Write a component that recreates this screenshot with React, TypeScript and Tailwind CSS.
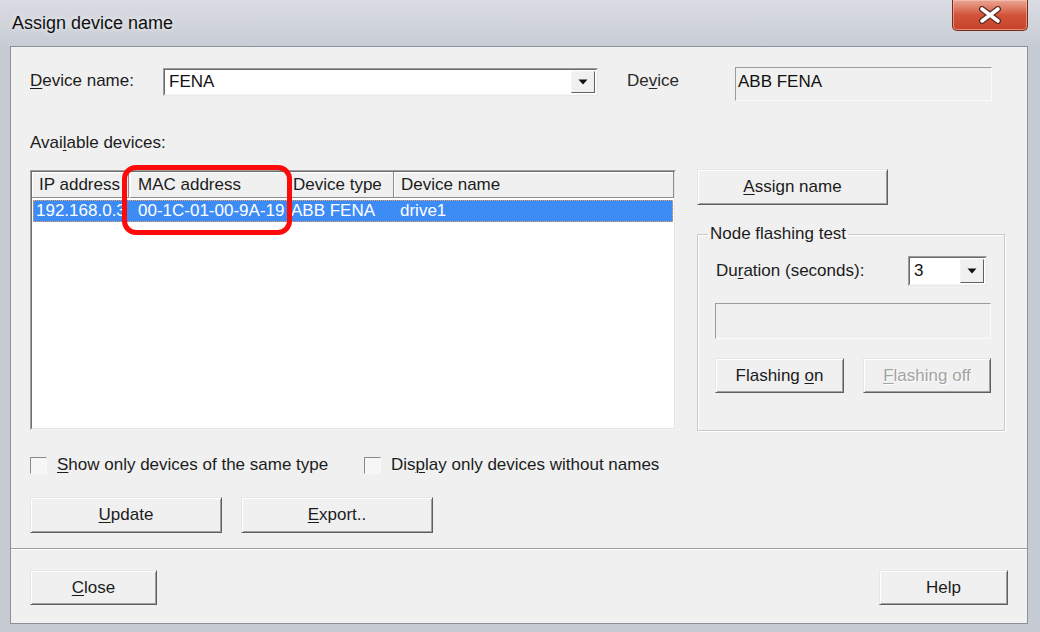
import type { ReactNode } from 'react';

function U({ children }: { children: ReactNode }) {
  return <span className="underline decoration-1 underline-offset-[2px]">{children}</span>;
}

function Button({
  children,
  className = '',
  disabled,
}: {
  children: ReactNode;
  className?: string;
  disabled?: boolean;
}) {
  return (
    <div
      className={`flex items-center justify-center border border-t-[#e6e6e6] border-l-[#e6e6e6] border-r-[#5f5f5f] border-b-[#5f5f5f] bg-[#f0f0f0] shadow-[inset_1px_1px_0_#ffffff,inset_-1px_-1px_0_#a0a0a0] ${
        disabled ? 'text-[#a3a3a3] [text-shadow:1px_1px_0_#ffffff]' : 'text-[#1c1c1c]'
      } ${className}`}
    >
      <span className="whitespace-pre">{children}</span>
    </div>
  );
}

function Arrow() {
  return (
    <svg width="10" height="6" viewBox="0 0 10 6">
      <path d="M0.5 0.5 H9.5 L5 5.5 Z" fill="#111" />
    </svg>
  );
}

function Combo({ value, className = '' }: { value: string; className?: string }) {
  return (
    <div className={`flex border border-t-[#9c9c9c] border-l-[#9c9c9c] border-r-[#e8e8e8] border-b-[#e8e8e8] ${className}`}>
      <div className="flex flex-1 border border-t-[#6a6a6a] border-l-[#6a6a6a] border-r-[#f6f6f6] border-b-[#f6f6f6] bg-white">
        <div className="flex flex-1 items-center pl-[4px] text-[#111]">{value}</div>
        <div className="m-[1px] flex w-[24px] items-center justify-center border border-t-[#f4f4f4] border-l-[#f4f4f4] border-r-[#606060] border-b-[#606060] bg-[#f0f0f0]">
          <Arrow />
        </div>
      </div>
    </div>
  );
}

function Sunken({ children, className = '' }: { children?: ReactNode; className?: string }) {
  return (
    <div className={`border border-t-[#9a9a9a] border-l-[#9a9a9a] border-r-[#fbfbfb] border-b-[#fbfbfb] bg-[#f0f0f0] ${className}`}>
      {children}
    </div>
  );
}

function Check({ children }: { children: ReactNode }) {
  return (
    <div className="flex items-center gap-[10px]">
      <div className="h-[17px] w-[17px] border border-t-[#8a8a8a] border-l-[#8a8a8a] border-r-[#f8f8f8] border-b-[#f8f8f8] bg-[#f6f6f6]" />
      <span>{children}</span>
    </div>
  );
}

function HeaderCell({ children, className = '' }: { children: ReactNode; className?: string }) {
  return (
    <div
      className={`flex h-full items-center overflow-hidden whitespace-nowrap border-r border-b border-r-[#8c8c8c] border-b-[#8c8c8c] shadow-[inset_1px_1px_0_#ffffff] ${className}`}
    >
      {children}
    </div>
  );
}

export default function App() {
  return (
    <div className="relative flex h-[632px] w-[1040px] flex-col overflow-hidden bg-[#c6cad2] font-['Liberation_Sans',Arial,sans-serif] text-[17px] leading-[20px] text-[#1c1c1c]">
      {/* title bar */}
      <div className="flex h-[46px] items-start justify-between bg-gradient-to-b from-[#d9dce2] to-[#c8ccd4] pl-[12px] pr-[12px]">
        <div className="mt-[13px] text-[18px] text-[#101010] [text-shadow:0_0_6px_#ffffff]">Assign device name</div>
        <div className="flex h-[31px] w-[76px] items-center justify-center rounded-b-[5px] border border-t-0 border-[#7b2b1b] bg-gradient-to-b from-[#e9a795] via-[#d2533a] to-[#c7432a] shadow-[inset_0_0_0_1px_rgba(255,210,190,0.5)]">
          <svg width="26" height="18" viewBox="0 0 26 18">
            <path d="M5 3 L21 15 M21 3 L5 15" stroke="#5a2a22" strokeWidth="6" strokeLinecap="round" />
            <path d="M5 3 L21 15 M21 3 L5 15" stroke="#ffffff" strokeWidth="3.6" strokeLinecap="round" />
          </svg>
        </div>
      </div>

      {/* client area */}
      <div className="mb-[8px] ml-[10px] mr-[12px] flex flex-1 flex-col border border-[#8c9098] bg-[#f0f0f0]">
        <div className="h-[501px] px-[19px] pt-[20px]">
          {/* device name row */}
          <div className="flex h-[34px] items-start">
            <div className="mt-[4px] w-[133px]">
              <U>D</U>evice name:
            </div>
            <Combo value="FENA" className="mt-[1px] h-[28px] w-[435px]" />
            <div className="ml-[29px] mt-[4px] w-[108px] text-[#2a2a2a]">
              De<U>v</U>ice
            </div>
            <Sunken className="h-[34px] w-[257px] pl-[2px] pt-[4px] text-[#111]">ABB FENA</Sunken>
          </div>

          <div className="mt-[32px]">
            Avai<U>l</U>able devices:
          </div>

          <div className="mt-[16px] flex gap-[21px]">
            {/* left column */}
            <div className="w-[646px]">
              <div className="relative mt-[1px]">
                <div className="h-[260px] border border-t-[#a0a0a0] border-l-[#a0a0a0] border-r-[#f4f4f4] border-b-[#f4f4f4]">
                  <div className="flex h-full flex-col border border-t-[#6e6e6e] border-l-[#6e6e6e] border-r-[#e3e3e3] border-b-[#e3e3e3] bg-white">
                    <div className="flex h-[26px] bg-[#f0f0f0]">
                      <HeaderCell className="w-[97px] pl-[7px]">IP address</HeaderCell>
                      <HeaderCell className="ml-[1px] w-[158px] pl-[8px]">MAC address</HeaderCell>
                      <HeaderCell className="ml-[2px] w-[104px] pl-[3px]">Device type</HeaderCell>
                      <HeaderCell className="flex-1 pl-[7px]">Device name</HeaderCell>
                    </div>
                    <div className="mx-[1px] mt-[2px] flex h-[22px] items-center border border-dotted border-[#f0a060] bg-[#3d8cf6] text-white">
                      <div className="w-[96px] overflow-hidden whitespace-nowrap pl-[2px]">192.168.0.3</div>
                      <div className="w-[158px] pl-[8px]">00-1C-01-00-9A-19</div>
                      <div className="w-[105px] pl-[3px]">ABB FENA</div>
                      <div className="flex-1 pl-[7px]">drive1</div>
                    </div>
                  </div>
                </div>
                {/* highlight */}
                <div className="absolute left-[92px] top-[-5px] h-[70px] w-[170px] rounded-[14px] border-[5px] border-[#ff0a0a]" />
              </div>

              <div className="mt-[25px] flex">
                <div className="w-[334px]">
                  <Check>
                    <U>S</U>how only devices of the same type
                  </Check>
                </div>
                <Check>
                  Dis<U>p</U>lay only devices without names
                </Check>
              </div>

              <div className="mt-[22px] flex gap-[19px]">
                <Button className="h-[36px] w-[192px]">
                  <U>U</U>pdate
                </Button>
                <Button className="h-[36px] w-[192px]">
                  <U>E</U>xport..
                </Button>
              </div>
            </div>

            {/* right column */}
            <div className="w-[308px]">
              <Button className="h-[36px] w-[191px]">
                <U>A</U>ssign name
              </Button>
              <fieldset className="mt-[19px] h-[207px] border border-[#c8c8c8] pl-[17px] shadow-[inset_1px_1px_0_#ffffff,1px_1px_0_#ffffff]">
                <legend className="ml-[-7px] px-[2px]">Node flashing test</legend>
                <div className="mt-[12px] flex h-[30px] items-center justify-between pr-[17px]">
                  <span className="pl-[1px]">
                    Du<U>r</U>ation (seconds):
                  </span>
                  <Combo value="3" className="h-[30px] w-[79px]" />
                </div>
                <Sunken className="mt-[17px] h-[36px] w-[276px]" />
                <div className="mt-[19px] flex gap-[19px]">
                  <Button className="h-[35px] w-[129px]">
                    Flashing <U>o</U>n
                  </Button>
                  <Button disabled className="h-[35px] w-[128px]">
                    <U>F</U>lashing off
                  </Button>
                </div>
              </fieldset>
            </div>
          </div>
        </div>

        <div className="h-px bg-[#a0a0a0]" />
        <div className="h-px bg-white" />

        <div className="flex justify-between px-[19px] pt-[20px]">
          <Button className="h-[35px] w-[127px]">
            <U>C</U>lose
          </Button>
          <Button className="h-[35px] w-[129px]">Help</Button>
        </div>
      </div>
    </div>
  );
}
